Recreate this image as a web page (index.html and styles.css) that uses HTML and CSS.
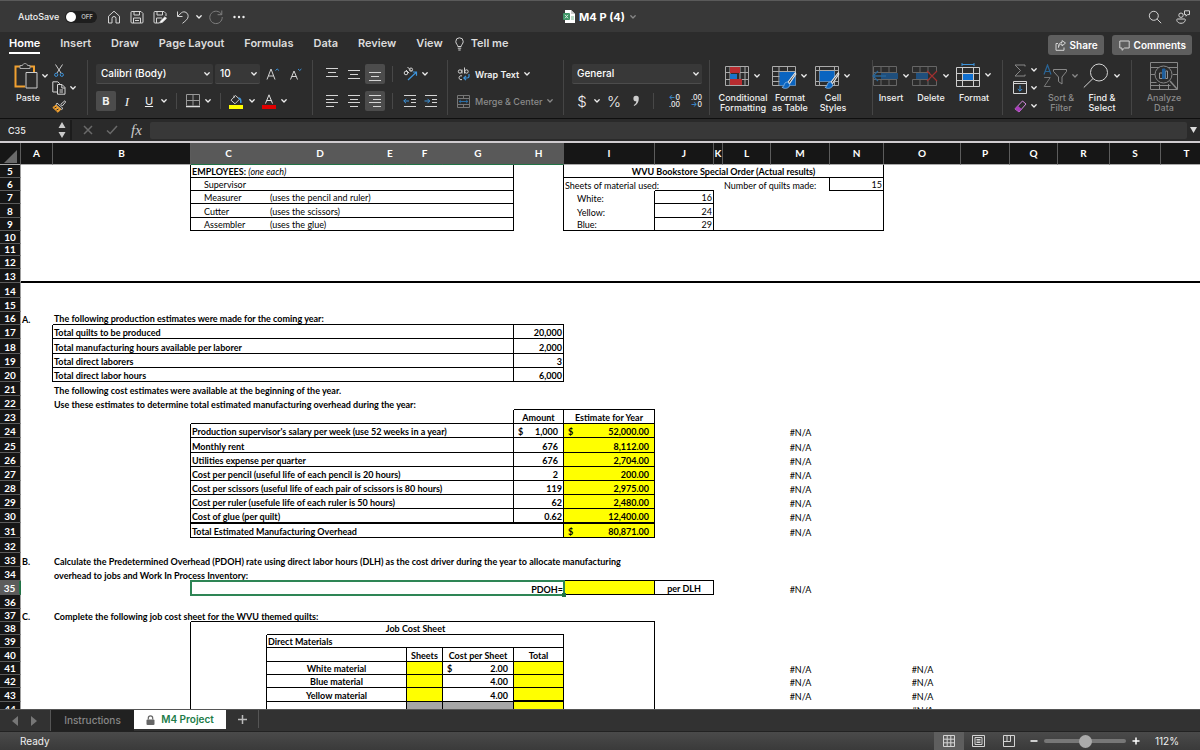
FILE: index.html
```html
<!DOCTYPE html>
<html lang="en">
<head>
<meta charset="utf-8">
<title>M4 P (4)</title>
<link rel="stylesheet" href="styles.css">
</head>
<body>
<svg class="defs" width="0" height="0" aria-hidden="true">
  <symbol id="chev" viewBox="0 0 8 8"><path d="M1.8 2.8 4 5 6.2 2.8" fill="none" stroke="currentColor" stroke-width="1.3" stroke-linecap="round" stroke-linejoin="round"/></symbol>
  <symbol id="brush" viewBox="0 0 14 18"><path d="M13 1.500 6 10.500l1.500 1.500L13.500 3z" fill="#2c2c2c" stroke="#e6e6e6"/><path d="M5.500 10.500c-2 0-3 1.500-3.200 3-.1 1-1 1.700-2 1.800 2.400 2 7.200 1.500 7.500-2.500z" fill="#0a64c0" stroke="#7fb4ea" stroke-width=".8"/></symbol>
</svg>

<header class="titlebar">
  <div class="quick">
    <label class="autosave" for="autosave">AutoSave</label>
    <span class="switch"><input type="checkbox" id="autosave" class="switch-input"><span class="knob"></span><span class="off">OFF</span></span>
    <button class="ib" aria-label="Home"><svg width="14" height="14" viewBox="0 0 14 14" class="ln"><path d="M1.500 6.200 7 1.200l5.500 5V13H9V8.500a2 2 0 0 0-4 0V13H1.500z"/></svg></button>
    <button class="ib" aria-label="Save"><svg width="14" height="14" viewBox="0 0 14 14" class="ln"><path d="M1 2.500a1 1 0 0 1 1-1h9l2 2V12a1 1 0 0 1-1 1H2a1 1 0 0 1-1-1zM4 1.500V5h5.500V1.500M3.500 13V8h7v5M5 10.500h4"/></svg></button>
    <button class="ib" aria-label="Save as"><svg width="14" height="14" viewBox="0 0 14 14" class="ln"><path d="M6 13H2a1 1 0 0 1-1-1V2.500a1 1 0 0 1 1-1h9l2 2V6M4 1.500V5h5.500V1.500M3.500 13V8H9"/><path d="M6.500 13 8 10.500 12 6.800l1.500 1.500-4.200 4z" fill="#fff"/></svg></button>
    <button class="ib" aria-label="Undo"><svg width="14" height="14" viewBox="0 0 14 14" class="ln"><path d="M1.500 1.500v5h5M1.700 6.300 5.500 2.700c3-2.300 7 .4 6.600 3.800C12 9 10 10.500 6.500 13.300"/></svg></button>
    <svg class="chev" width="8" height="8"><use href="#chev"/></svg>
    <button class="ib redo" aria-label="Redo"><svg width="16" height="16" viewBox="0 0 16 16" class="ln"><path d="M13.500 5.500A6.200 6.200 0 1 0 14.200 8M13.800 1.500v4.200H9.600"/></svg></button>
    <button class="ib dots" aria-label="More"><svg width="12" height="4" viewBox="0 0 12 4"><g fill="#eee"><circle cx="1.500" cy="2" r="1.200"/><circle cx="6" cy="2" r="1.200"/><circle cx="10.500" cy="2" r="1.200"/></g></svg></button>
  </div>
  <div class="doc">
    <svg width="12" height="13" viewBox="0 0 12 13"><path d="M2 0h6l4 4v9H2z" fill="#fff"/><path d="M8 0v4h4z" fill="#ccc"/><rect y="3" width="7" height="7" rx="1" fill="#3f9466"/><path d="m2 4.800 3 3.500M5 4.800 2 8.300" stroke="#d5efe0"/><path d="M8 7h3M8 9h3" stroke="#79b893"/></svg>
    <span class="doc-name">M4 P (4)</span>
    <svg class="chev dim" width="8" height="8"><use href="#chev"/></svg>
  </div>
  <div class="title-right">
    <button class="ib" aria-label="Search"><svg width="14" height="14" viewBox="0 0 14 14" class="ln"><circle cx="5.800" cy="5.800" r="4.500"/><path d="m9.200 9.200 4 4"/></svg></button>
    <button class="ib" aria-label="Presence"><svg width="14" height="14" viewBox="0 0 14 14" class="ln"><circle cx="5" cy="5.200" r="2.200"/><path d="M1.500 9h7c.8 0 1 .6.800 1.300-.5 2-2.200 3-4.300 3s-3.700-1-4.200-3C.6 9.600.9 9 1.500 9zM8.500.8h5v3.800h-2L10 6.200V4.600H8.500z"/></svg></button>
  </div>
</header>

<nav class="tabs">
  <a href="#" class="tab active">Home</a><a href="#" class="tab">Insert</a><a href="#" class="tab">Draw</a><a href="#" class="tab">Page Layout</a><a href="#" class="tab">Formulas</a><a href="#" class="tab">Data</a><a href="#" class="tab">Review</a><a href="#" class="tab">View</a>
  <a href="#" class="tab tell"><svg width="9" height="14" viewBox="0 0 9 14" class="ln"><path d="M2.800 9.500C2.800 7.500.8 7 .8 4.500a3.700 3.700 0 0 1 7.400 0c0 2.500-2 3-2 5zM2.800 11.200h3.400M3.300 13h2.400"/></svg>Tell me</a>
  <div class="tabs-right">
    <button class="pill"><svg width="11" height="11" viewBox="0 0 11 11" class="ln"><path d="M3 3.500H1v6.800h8V7.500M3.500 7.500C3.700 5 5 4 7 4V6l3.500-3L7 .6v1.800C4.500 2.500 3.300 4.500 3.500 7.500z"/></svg>Share</button>
    <button class="pill"><svg width="11" height="11" viewBox="0 0 11 11" class="ln"><path d="M.8 1h9.400v7H5.500L3 10.300V8H.8z"/></svg>Comments</button>
  </div>
</nav>

<section class="ribbon">
  <div class="group clip">
    <div class="paste">
      <div class="big"><svg width="25" height="26" viewBox="0 0 25 26"><path d="M7 3.500H1.500v20H11M15 3.500h5V9" fill="none" stroke="#f0a030" stroke-width="2"/><path d="M6 5.500V2.500h2.500c.3-2.600 4.700-2.600 5 0H16v3z" fill="#2c2c2c" stroke="#aaa"/><path d="M12 9.500h11v15.500H12z" fill="#2c2c2c" stroke="#ccc"/></svg><svg class="chev" width="8" height="8"><use href="#chev"/></svg></div>
      <button class="lab">Paste</button>
    </div>
    <div class="cliptools">
      <button class="ib" aria-label="Cut"><svg width="10" height="13" viewBox="0 0 10 13" fill="none"><path d="m1.500.5 5.500 8.500M8.500.5 3 9" stroke="#ccc"/><circle cx="2.200" cy="10.800" r="1.600" stroke="#3d94dc"/><circle cx="7.800" cy="10.800" r="1.600" stroke="#3d94dc"/></svg></button><span></span>
      <button class="ib" aria-label="Copy"><svg width="14" height="14" viewBox="0 0 14 14" class="ln"><path d="M5 11H.8V.8h5l2 2M5.500 3.500H10l3 3v6.700H5.500zM9.800 3.500V7H13M7.500 9h3.500M7.500 11h3.500"/></svg></button><svg class="chev" width="8" height="8"><use href="#chev"/></svg>
      <button class="ib" aria-label="Format painter"><svg width="14" height="13" viewBox="0 0 14 13" fill="none"><path d="m12.800.8-4 3.500 1.500 1.700 3.300-4z" stroke="#ccc"/><path d="m5 3 6 5.500-1.800 1L4 4.800z" stroke="#ccc"/><path d="M4 5.200.8 7.500 6 12.300l2.800-3z" stroke="#f0a030" fill="#f0a030"/><path d="m2.500 8 2-1M4.500 10l2-1" stroke="#2c2c2c"/></svg></button><span></span>
    </div>
  </div>

  <div class="group">
    <div class="row font1">
      <span class="pick"><select aria-label="Font"><option>Calibri (Body)</option></select><svg class="chev" width="8" height="8"><use href="#chev"/></svg></span>
      <span class="pick"><select aria-label="Font size"><option>10</option></select><svg class="chev" width="8" height="8"><use href="#chev"/></svg></span>
      <button class="ib" aria-label="Increase font size"><svg width="14" height="14" viewBox="0 0 14 14" class="ln"><path d="M1 12.500 5 2l4 10.500M2.500 9h5"/><path d="M9.500 3.500 11.200 2l1.700 1.500" stroke="#3d94dc"/></svg></button>
      <button class="ib" aria-label="Decrease font size"><svg width="14" height="14" viewBox="0 0 14 14" class="ln"><path d="M1.500 12.500 5 4l3.500 8.500M2.800 9.500h4.400"/><path d="M9 2l1.700 1.500L12.400 2" stroke="#3d94dc"/></svg></button>
    </div>
    <div class="row font2">
      <button class="ib on"><b>B</b></button><button class="ib"><i class="serif">I</i></button><button class="ib light"><u>U</u></button><svg class="chev" width="8" height="8"><use href="#chev"/></svg>
      <i class="sep"></i>
      <button class="ib" aria-label="Borders"><svg width="14" height="14" viewBox="0 0 14 14" fill="none" stroke="#999"><path d="M.5.5h13v11M.5.5v11M7 .5v11M.5 6.500h13" /><path d="M0 12.500h14" stroke="#ddd" stroke-width="1.500"/></svg></button><svg class="chev" width="8" height="8"><use href="#chev"/></svg>
      <i class="sep"></i>
      <button class="ib" aria-label="Fill color"><svg width="14" height="15" viewBox="0 0 14 15"><path d="M6.500 1.500 2 6.200l4 3.600 4.500-4.600zM5 4V1.500" fill="none" stroke="#ccc"/><path d="M9.500 4c2 0 2.500 2 2.300 5" fill="none" stroke="#3d94dc" stroke-width="1.500"/><rect y="11" width="14" height="4" fill="#ff0"/></svg></button><svg class="chev" width="8" height="8"><use href="#chev"/></svg>
      <button class="ib" aria-label="Font color"><svg width="14" height="15" viewBox="0 0 14 15"><path d="M3.500 9.500 7 .8l3.500 8.700M4.700 6.500h4.600" fill="none" stroke="#ddd"/><rect y="11" width="14" height="4" fill="#e00000"/></svg></button><svg class="chev" width="8" height="8"><use href="#chev"/></svg>
    </div>
  </div>

  <div class="group">
    <div class="row align1">
      <button class="ib" aria-label="Top align"><svg width="12" height="14" viewBox="0 0 12 14" class="ln"><path d="M0 1.500h12M2 5.500h8M0 9.500h12"/></svg></button>
      <button class="ib" aria-label="Middle align"><svg width="12" height="14" viewBox="0 0 12 14" class="ln"><path d="M0 3.500h12M2 7.500h8M0 11.500h12"/></svg></button>
      <button class="ib on" aria-label="Bottom align"><svg width="12" height="14" viewBox="0 0 12 14" class="ln"><path d="M0 5.500h12M2 9.500h8M0 13.500h12"/></svg></button>
      <i class="sep"></i>
      <button class="ib" aria-label="Orientation"><svg width="15" height="14" viewBox="0 0 15 14" class="ln"><circle cx="3" cy="6" r="1.800"/><path d="m3 3 3.200 3.200M4.500 0l4.200 4.200"/><circle cx="8" cy="2.600" r="1.600"/><path d="m5 13 8.500-8M9.800 5h3.700v3.700" stroke="#3d94dc" stroke-width="1.200"/></svg></button><svg class="chev" width="8" height="8"><use href="#chev"/></svg>
    </div>
    <div class="row align2">
      <button class="ib" aria-label="Align left"><svg width="12" height="12" viewBox="0 0 12 12" class="ln"><path d="M0 .5h12M0 4.500h8M0 7.500h12M0 11.500h8"/></svg></button>
      <button class="ib" aria-label="Center"><svg width="12" height="12" viewBox="0 0 12 12" class="ln"><path d="M0 .5h12M2 4.500h8M0 7.500h12M2 11.500h8"/></svg></button>
      <button class="ib on" aria-label="Align right"><svg width="12" height="12" viewBox="0 0 12 12" class="ln"><path d="M0 .5h12M4 4.500h8M0 7.500h12M4 11.500h8"/></svg></button>
      <i class="sep"></i>
      <button class="ib" aria-label="Decrease indent"><svg width="13" height="12" viewBox="0 0 13 12" class="ln"><path d="M1 .5h12M8 4.500h5M8 7.500h5M1 11.500h12"/><path d="M.8 6H6M3 3.800.8 6 3 8.200" stroke="#3d94dc"/></svg></button>
      <button class="ib" aria-label="Increase indent"><svg width="13" height="12" viewBox="0 0 13 12" class="ln"><path d="M1 .5h12M8 4.500h5M8 7.500h5M1 11.500h12"/><path d="M.5 6h5.200M3.500 3.800 5.700 6 3.500 8.200" stroke="#3d94dc"/></svg></button>
    </div>
  </div>

  <div class="group">
    <div class="row wrap">
      <svg width="13" height="14" viewBox="0 0 13 14" class="ln"><circle cx="3" cy="4.500" r="1.700"/><path d="M5 2.500v4M7.500.5v6"/><circle cx="9.500" cy="4.500" r="1.700"/><path d="M5 9a2 2 0 1 0 0 3.500"/><path d="M12 7v2.500c0 1-.8 1.500-2 1.500H7M9 8.800 6.800 11 9 13.200" stroke="#3d94dc" stroke-width="1.200"/></svg>
      <button class="tb strong">Wrap Text</button><svg class="chev" width="8" height="8"><use href="#chev"/></svg>
    </div>
    <div class="row wrap off-state">
      <svg width="13" height="13" viewBox="0 0 13 13" fill="none" stroke="#777"><path d="M.5.5h12v12H.5zM.5 3.500h12M.5 9.500h12M6.500.5v3M6.500 9.500v3"/><path d="M2 6.500h9M3.800 5 2.200 6.500 3.800 8M9.200 5l1.600 1.500L9.200 8" stroke="#2a6ea6"/></svg>
      <button class="tb">Merge &amp; Center</button><svg class="chev" width="8" height="8"><use href="#chev"/></svg>
    </div>
  </div>

  <div class="group">
    <div class="row num1">
      <span class="pick"><select aria-label="Number format"><option>General</option></select><svg class="chev" width="8" height="8"><use href="#chev"/></svg></span>
    </div>
    <div class="row num2">
      <button class="ib sym">$</button><svg class="chev" width="8" height="8"><use href="#chev"/></svg><button class="ib sym">%</button><button class="ib comma" aria-label="Comma style"><svg width="8" height="12" viewBox="0 0 8 12"><path d="M4 .8a2.700 2.700 0 0 1 2.800 2.900c0 3-1.500 5.700-4.600 7.300l-.5-.8c1.700-1 2.500-2.200 2.600-3.900A2.700 2.700 0 1 1 4 .8z" fill="#ccc"/></svg></button>
      <i class="sep"></i>
      <button class="ib dec"><span><em>←</em>0</span><span>.00</span></button><button class="ib dec"><span>.00</span><span><em>→</em>0</span></button>
    </div>
  </div>

  <div class="group items styles">
    <div class="item"><div class="big"><svg width="24" height="20" viewBox="0 0 24 20"><path d="M.5.5h23v19H.5zM5 .5v19M15 .5v19M20 .5v19M.5 6.500h23M.5 13.500h23" fill="none" stroke="#aaa"/><rect x="5" y="1" width="10" height="6" fill="#b82c30"/><rect x="5" y="8" width="7" height="5" fill="#1873c9"/><rect x="5" y="13" width="12" height="6" fill="#b82c30"/></svg><svg class="chev" width="8" height="8"><use href="#chev"/></svg></div><button class="lab">Conditional<br>Formatting</button></div>
    <div class="item"><div class="big"><span class="stack"><svg width="24" height="20" viewBox="0 0 24 20"><path d="M.5.5h23v19H.5zM7 .5v19M15.500 .5v19M.5 5.500h23M.5 10.500h23M.5 15.500h23" fill="none" stroke="#aaa"/><rect x="7.500" y="6" width="16" height="13.500" fill="#0a64c0"/></svg><svg class="over" width="18" height="19"><use href="#brush"/></svg></span><svg class="chev" width="8" height="8"><use href="#chev"/></svg></div><button class="lab">Format<br>as Table</button></div>
    <div class="item"><div class="big"><span class="stack"><svg width="24" height="20" viewBox="0 0 24 20"><path d="M.5.5h23v19H.5zM4.500 .5v19M.5 4.500h23M19.500 .5v19M.5 15.500h23" fill="none" stroke="#aaa"/><rect x="4.500" y="5" width="15" height="10.500" fill="#0a64c0"/></svg><svg class="over" width="18" height="19"><use href="#brush"/></svg></span><svg class="chev" width="8" height="8"><use href="#chev"/></svg></div><button class="lab">Cell<br>Styles</button></div>
  </div>

  <div class="group items cells">
    <div class="item"><div class="big"><svg width="26" height="20" viewBox="0 0 26 20"><path d="M1.500.5h23v19h-23zM9 .5v6M17 .5v6M9 13v6.500M17 13v6.500M1.500 6.500h23M1.500 13.500h23" fill="none" stroke="#666"/><path d="M9 7h17v6H9z" fill="#1f4f7d"/><path d="M14 10H1M6 5 1 10l5 5" fill="none" stroke="#2a6596" stroke-width="1.300"/></svg><svg class="chev" width="8" height="8"><use href="#chev"/></svg></div><button class="lab">Insert</button></div>
    <div class="item"><div class="big"><svg width="26" height="20" viewBox="0 0 26 20"><path d="M.5.500h24v5M.5.500v6M.5 13.500v6h24v-5M8 .5v6M16 .5v6M8 13v6.500M16 13v6.500M.5 6.500h17M.5 13.500h17" fill="none" stroke="#666"/><path d="M4 7h12v6H4z" fill="#1f4f7d"/><path d="m15 5 10 10M25 5 15 15" stroke="#a03030" stroke-width="1.200"/></svg><svg class="chev" width="8" height="8"><use href="#chev"/></svg></div><button class="lab">Delete</button></div>
    <div class="item"><div class="big fmt"><svg width="24" height="24" viewBox="0 0 24 24"><path d="M.5 4.500h23v19H.5zM6.500 4.500v19M17.500 4.500v19M.5 10.500h23M.5 17.500h23" fill="none" stroke="#ccc"/><rect x="7" y="11" width="10" height="6" fill="#0f6fd0"/><path d="M6 1.500h12M6 0v3M18 0v3" stroke="#3d94dc"/></svg><svg class="chev" width="8" height="8"><use href="#chev"/></svg></div><button class="lab">Format</button></div>
  </div>

  <div class="group items edit">
    <div class="edittools">
      <button class="ib" aria-label="AutoSum"><svg width="12" height="13" viewBox="0 0 12 13" fill="none" stroke="#888"><path d="M11 2.500V1H1l5.500 5.500L1 12h10v-1.500"/></svg></button><svg class="chev" width="8" height="8"><use href="#chev"/></svg>
      <button class="ib" aria-label="Fill"><svg width="14" height="13" viewBox="0 0 14 13" class="ln"><path d="M.5.5h13v12H.5zM.5 2.500h13"/><path d="M7 4.500v5.500M4.800 8 7 10.200 9.200 8" stroke="#3d94dc"/></svg></button><svg class="chev" width="8" height="8"><use href="#chev"/></svg>
      <button class="ib" aria-label="Clear"><svg width="13" height="13" viewBox="0 0 13 13"><path d="M8.500 1 12 4 5 12 1 8.800z" fill="none" stroke="#d58be0"/><path d="M3.800 5.800 1 8.800 5 12l2.700-3z" fill="#a93cba"/></svg></button><svg class="chev" width="8" height="8"><use href="#chev"/></svg>
    </div>
    <div class="item off-state"><div class="big"><svg width="24" height="24" viewBox="0 0 24 24" fill="none"><path d="M1 10.500 4.500 1 8 10.500M2.200 7.500h4.600" stroke="#2a6596" stroke-width="1.200"/><path d="M1.200 13.500h6L1.200 22.500h6.300" stroke="#777"/><path d="M10.500 5.500h13v2L19 13v7l-3.500-2.500V13l-5-5.500z" stroke="#888"/></svg><svg class="chev" width="8" height="8"><use href="#chev"/></svg></div><button class="lab">Sort &amp;<br>Filter</button></div>
    <div class="item"><div class="big"><svg width="26" height="26" viewBox="0 0 26 26" class="ln"><circle cx="16" cy="9.500" r="8.500"/><path d="M10 15.500.8 24.500"/></svg><svg class="chev" width="8" height="8"><use href="#chev"/></svg></div><button class="lab">Find &amp;<br>Select</button></div>
  </div>

  <div class="group items analyze off-state">
    <div class="item"><div class="big"><svg width="28" height="28" viewBox="0 0 28 28" fill="none" stroke="#888"><path d="M.5.5h27v27H.5zM.5 5.500h27M.5 12.500H5M.5 20.500h6M23 12.500h4.500M9.500 22v5.500M18.500 22v5.500M.5 23.500h20"/><circle cx="13.500" cy="12.500" r="8.500" fill="#2c2c2c"/><path d="m20 19 7 8" stroke-width="1.500"/><path d="M9.500 11h3v5.500h-3zM15.500 9h2v7.500h-2z" stroke="#999"/><path d="M12.500 7h2.500v9.500h-2.500z" fill="#1f5f9c" stroke="#1f5f9c"/></svg></div><button class="lab">Analyze<br>Data</button></div>
  </div>
</section>

<section class="formula">
  <div class="namebox"><input class="cellref" value="C35" aria-label="Name box"><svg width="8" height="16" viewBox="0 0 8 16"><path d="m4 0 3.500 6h-7zM4 16l3.500-6h-7z" fill="#ccc"/></svg></div>
  <div class="fx">
    <svg width="10" height="10" viewBox="0 0 10 10"><path d="m1 1 8 8M9 1 1 9" stroke="#6a6a6a" stroke-width="1.500"/></svg>
    <svg width="12" height="10" viewBox="0 0 12 10"><path d="m1 5.500 3.200 3L11 1" stroke="#6a6a6a" stroke-width="1.500" fill="none"/></svg>
    <i class="fxlabel">fx</i>
  </div>
  <input class="fxinput" aria-label="Formula">
  <svg class="expand" width="7" height="6" viewBox="0 0 7 6"><path d="M0 0h7L3.500 6z" fill="#ddd"/></svg>
</section>

<main class="sheet">
<table class="grid">
<colgroup><col class="w21"><col class="w32"><col class="w138"><col class="w76"><col class="w107"><col class="w33"><col class="w36"><col class="w71"><col class="w50"><col class="w91"><col class="w59"><col class="w9"><col class="w48"><col class="w59"><col class="w54"><col class="w77"><col class="w49"><col class="w48"><col class="w52"><col class="w51"><col></colgroup>
<thead><tr><th class="corner"><svg width="13" height="13" viewBox="0 0 13 13"><path d="M13 0v13H0z" fill="#6a6a6a"/></svg></th><th>A</th><th>B</th><th class="s">C</th><th class="s">D</th><th class="s">E</th><th class="s">F</th><th class="s">G</th><th class="s">H</th><th>I</th><th>J</th><th>K</th><th>L</th><th>M</th><th>N</th><th>O</th><th>P</th><th>Q</th><th>R</th><th>S</th><th class="last">T</th></tr></thead>
<tbody>
<tr class="h13"><th>5</th><td></td><td class="r"></td><td colspan="5" class="r b"><b>EMPLOYEES:</b> <i>(one each)</i></td><td class="r"></td><td colspan="6" class="r b c"><b>WVU Bookstore Special Order (Actual results)</b></td><td colspan="6"></td></tr>
<tr class="h13"><th>6</th><td></td><td class="r"></td><td class="b in">Supervisor</td><td colspan="4" class="r b"></td><td class="r"></td><td>Sheets of material used:</td><td class="b"></td><td></td><td colspan="2" class="r">Number of quilts made:</td><td class="r b n">15</td><td colspan="6"></td></tr>
<tr class="h13"><th>7</th><td></td><td class="r"></td><td class="b in">Measurer</td><td colspan="4" class="r b d">(uses the pencil and ruler)</td><td class="r"></td><td class="r in">White:</td><td class="r b n">16</td><td colspan="4" class="r"></td><td colspan="6"></td></tr>
<tr class="h14"><th>8</th><td></td><td class="r"></td><td class="b in">Cutter</td><td colspan="4" class="r b d">(uses the scissors)</td><td class="r"></td><td class="r in">Yellow:</td><td class="r b n">24</td><td colspan="4" class="r"></td><td colspan="6"></td></tr>
<tr class="h13"><th>9</th><td></td><td class="r"></td><td class="b in">Assembler</td><td colspan="4" class="r b d">(uses the glue)</td><td class="r"></td><td class="r b in">Blue:</td><td class="r b n">29</td><td colspan="4" class="r b"></td><td colspan="6"></td></tr>
<tr class="h13"><th>10</th><td colspan="20"></td></tr>
<tr class="h12"><th>11</th><td colspan="20"></td></tr>
<tr class="h13"><th>12</th><td colspan="20"></td></tr>
<tr class="h14"><th>13</th><td colspan="20" class="thick"></td></tr>
<tr class="h15"><th>14</th><td colspan="20"></td></tr>
<tr class="h14"><th>15</th><td colspan="20"></td></tr>
</tbody>
<tbody class="bold">
<tr class="h13"><th>16</th><td>A.</td><td class="b">The following production estimates were made for the coming year:</td><td colspan="6" class="b"></td><td colspan="12"></td></tr>
<tr class="h14"><th>17</th><td class="r"></td><td colspan="6" class="r b">Total quilts to be produced</td><td class="r b n">20,000</td><td colspan="12"></td></tr>
<tr class="h15"><th>18</th><td class="r"></td><td colspan="6" class="r b">Total manufacturing hours available per laborer</td><td class="r b n">2,000</td><td colspan="12"></td></tr>
<tr class="h14"><th>19</th><td class="r"></td><td colspan="6" class="r b">Total direct laborers</td><td class="r b n">3</td><td colspan="12"></td></tr>
<tr class="h14"><th>20</th><td class="r"></td><td colspan="6" class="r b">Total direct labor hours</td><td class="r b n">6,000</td><td colspan="12"></td></tr>
<tr class="h14"><th>21</th><td></td><td colspan="7">The following cost estimates were available at the beginning of the year.</td><td colspan="12"></td></tr>
<tr class="h14"><th>22</th><td></td><td colspan="6">Use these estimates to determine total estimated manufacturing overhead during the year:</td><td class="b"></td><td class="b"></td><td colspan="11"></td></tr>
<tr class="h14"><th>23</th><td></td><td></td><td colspan="5" class="r b"></td><td class="r b c">Amount</td><td class="r b c">Estimate for Year</td><td colspan="11"></td></tr>
<tr class="h14"><th>24</th><td></td><td class="r"></td><td colspan="5" class="r b">Production supervisor's salary per week (use 52 weeks in a year)</td><td class="r b acc"><div class="money"><span>$</span><span>1,000</span></div></td><td class="r b y acc"><div class="money"><span>$</span><span>52,000.00</span></div></td><td colspan="3"></td><td class="c na">#N/A</td><td colspan="7"></td></tr>
<tr class="h15"><th>25</th><td></td><td class="r"></td><td colspan="5" class="r b">Monthly rent</td><td class="r b n acc">676</td><td class="r b y n acc">8,112.00</td><td colspan="3"></td><td class="c na">#N/A</td><td colspan="7"></td></tr>
<tr class="h14"><th>26</th><td></td><td class="r"></td><td colspan="5" class="r b">Utilities expense per quarter</td><td class="r b n acc">676</td><td class="r b y n acc">2,704.00</td><td colspan="3"></td><td class="c na">#N/A</td><td colspan="7"></td></tr>
<tr class="h14"><th>27</th><td></td><td class="r"></td><td colspan="5" class="r b">Cost per pencil (useful life of each pencil is 20 hours)</td><td class="r b n acc">2</td><td class="r b y n acc">200.00</td><td colspan="3"></td><td class="c na">#N/A</td><td colspan="7"></td></tr>
<tr class="h14"><th>28</th><td></td><td class="r"></td><td colspan="5" class="r b">Cost per scissors (useful life of each pair of scissors is 80 hours)</td><td class="r b n">119</td><td class="r b y n acc">2,975.00</td><td colspan="3"></td><td class="c na">#N/A</td><td colspan="7"></td></tr>
<tr class="h14"><th>29</th><td></td><td class="r"></td><td colspan="5" class="r b">Cost per ruler (usefule life of each ruler is 50 hours)</td><td class="r b n">62</td><td class="r b y n acc">2,480.00</td><td colspan="3"></td><td class="c na">#N/A</td><td colspan="7"></td></tr>
<tr class="h14"><th>30</th><td></td><td class="r"></td><td colspan="5" class="r b">Cost of glue (per quilt)</td><td class="r b n">0.62</td><td class="r b y n acc">12,400.00</td><td colspan="3"></td><td class="c na">#N/A</td><td colspan="7"></td></tr>
<tr class="h15"><th>31</th><td></td><td class="r"></td><td colspan="6" class="r b t">Total Estimated Manufacturing Overhead</td><td class="r b y t acc"><div class="money"><span>$</span><span>80,871.00</span></div></td><td colspan="3"></td><td class="c na">#N/A</td><td colspan="7"></td></tr>
<tr class="h15"><th>32</th><td colspan="20"></td></tr>
<tr class="h14"><th>33</th><td>B.</td><td colspan="9">Calculate the Predetermined Overhead (PDOH) rate using direct labor hours (DLH) as the cost driver during the year to allocate manufacturing</td><td colspan="10"></td></tr>
<tr class="h14"><th>34</th><td></td><td colspan="7">overhead to jobs and Work In Process Inventory:</td><td class="b"></td><td class="b"></td><td colspan="10"></td></tr>
<tr class="h14"><th class="s">35</th><td></td><td></td><td colspan="6" class="n sel">PDOH=<span class="handle"></span></td><td class="r b y"></td><td class="r b c">per DLH</td><td colspan="2"></td><td class="c na">#N/A</td><td colspan="7"></td></tr>
<tr class="h14"><th>36</th><td colspan="20"></td></tr>
<tr class="h13"><th>37</th><td>C.</td><td>Complete the following job cost sheet for the WVU themed quilts:</td><td colspan="7" class="b"></td><td colspan="11"></td></tr>
<tr class="h13"><th>38</th><td></td><td class="r"></td><td></td><td colspan="5" class="b c">Job Cost Sheet</td><td class="r"></td><td colspan="11"></td></tr>
<tr class="h13"><th>39</th><td></td><td class="r"></td><td class="r"></td><td colspan="5" class="r b">Direct Materials</td><td class="r"></td><td colspan="11"></td></tr>
<tr class="h14"><th>40</th><td></td><td class="r"></td><td class="r"></td><td colspan="2" class="r b"></td><td class="r b c">Sheets</td><td class="r b c">Cost per Sheet</td><td class="r b c">Total</td><td class="r"></td><td colspan="11"></td></tr>
<tr class="h13"><th>41</th><td></td><td class="r"></td><td class="r"></td><td colspan="2" class="r b c">White material</td><td class="r b y"></td><td class="r b acc"><div class="money"><span>$</span><span>2.00</span></div></td><td class="r b y"></td><td class="r"></td><td colspan="3"></td><td class="c na">#N/A</td><td></td><td class="c na">#N/A</td><td colspan="5"></td></tr>
<tr class="h13"><th>42</th><td></td><td class="r"></td><td class="r"></td><td colspan="2" class="r b c">Blue material</td><td class="r b y"></td><td class="r b n acc">4.00</td><td class="r b y"></td><td class="r"></td><td colspan="3"></td><td class="c na">#N/A</td><td></td><td class="c na">#N/A</td><td colspan="5"></td></tr>
<tr class="h14"><th>43</th><td></td><td class="r"></td><td class="r"></td><td colspan="2" class="r b c">Yellow material</td><td class="r b y"></td><td class="r b n acc">4.00</td><td class="r b2 y"></td><td class="r"></td><td colspan="3"></td><td class="c na">#N/A</td><td></td><td class="c na">#N/A</td><td colspan="5"></td></tr>
<tr class="h14"><th>44</th><td></td><td class="r"></td><td class="r"></td><td colspan="2" class="r b"></td><td class="r b g"></td><td class="r b g"></td><td class="r b y"></td><td class="r"></td><td colspan="3"></td><td></td><td></td><td class="c na">#N/A</td><td colspan="5"></td></tr>
</tbody>
</table>
</main>

<div class="sheets">
  <div class="arrows"><svg width="6" height="10" viewBox="0 0 6 10"><path d="M6 0v10L0 5z" fill="#777"/></svg><svg width="6" height="10" viewBox="0 0 6 10"><path d="M0 0v10l6-5z" fill="#777"/></svg></div>
  <button class="stab">Instructions</button>
  <button class="stab current"><svg width="9" height="10" viewBox="0 0 9 10"><path d="M2.300 4.500V3a2.200 2.200 0 0 1 4.400 0v1.500" fill="none" stroke="#666" stroke-width="1.200"/><rect x=".5" y="4.500" width="8" height="5.500" rx="1" fill="#666"/></svg>M4 Project</button>
  <button class="add" aria-label="Add sheet"><svg width="9" height="9" viewBox="0 0 9 9"><path d="M4.500 0v9M0 4.500h9" stroke="#bbb" stroke-width="1.500"/></svg></button>
</div>

<footer class="status">
  <span class="ready">Ready</span>
  <button class="view on" aria-label="Normal view"><svg width="12" height="12" viewBox="0 0 12 12" class="ln"><path d="M.5.500h11v11H.5zM4.200.5v11M7.800.5v11M.5 4.200h11M.5 7.800h11"/></svg></button>
  <button class="view" aria-label="Page layout"><svg width="13" height="12" viewBox="0 0 13 12" class="ln"><path d="M.5.500h12v11H.5zM3 2.500h7v7H3zM4.500 4.500h4M4.500 6h4M4.500 7.500h4"/></svg></button>
  <button class="view" aria-label="Page break preview"><svg width="12" height="12" viewBox="0 0 12 12" class="ln"><path d="M.5.500h11v11H.5zM4 .5v6M7.500.5v6M.5 6.500h7"/></svg></button>
  <button class="zoom" aria-label="Zoom out"><svg width="8" height="8" viewBox="0 0 8 8"><path d="M.5 4h7" stroke="#fff" stroke-width="1.500"/></svg></button>
  <input type="range" class="slider" min="0" max="100" value="51" aria-label="Zoom">
  <button class="zoom" aria-label="Zoom in"><svg width="8" height="8" viewBox="0 0 8 8"><path d="M.5 4h7M4 .5v7" stroke="#fff" stroke-width="1.500"/></svg></button>
  <span class="pct">112%</span>
</footer>
</body>
</html>
```

FILE: styles.css
```css
* { box-sizing: border-box; }
body {
  margin: 0;
  height: 100vh;
  display: flex;
  flex-direction: column;
  overflow: hidden;
  background: #2c2c2c;
  color: #f0f0f0;
  font: 500 9px/11px Inter, "Liberation Sans", sans-serif;
}
.defs { display: none; }
svg { display: block; flex: none; }
button, input, select { font: inherit; color: inherit; margin: 0; padding: 0; border: 0; background: none; }
button { white-space: nowrap; }
.ln { fill: none; stroke: #d4d4d4; stroke-width: 1; }
.chev { color: #eee; }
.dim { color: #888; }
.ib { display: flex; align-items: center; justify-content: center; }
.on { background: #4c4c4c; border-radius: 2px; }
.off-state, .off-state .chev { color: #8a8a8a; }

/* title bar */
.titlebar {
  display: grid;
  grid-template-columns: 1fr auto 1fr;
  align-items: center;
  height: 32px;
  flex: none;
  background: #383838;
  border-top: 1px solid #5a5a5a;
}
.quick {
  display: grid;
  grid-template-columns: 47px 38px 22px 24px 22px 24px 8px 26px 20px;
  align-items: center;
  justify-items: center;
  padding-left: 18px;
}
.autosave { justify-self: start; font-size: 9px; }
.switch {
  justify-self: start;
  display: grid;
  grid-template-columns: 12px 1fr;
  align-items: center;
  width: 32px;
  height: 12px;
  border-radius: 6px;
  background: #1e1e1e;
}
.switch-input { appearance: none; grid-area: 1 / 1 / 2 / 3; width: 32px; height: 12px; }
.knob { grid-area: 1 / 1; width: 10px; height: 10px; margin-left: 1px; border-radius: 5px; background: #fff; }
.off { grid-area: 1 / 2; text-align: center; font-size: 6px; font-weight: 600; color: #bbb; }
.redo { opacity: .45; }
.doc { display: flex; align-items: center; gap: 4px; }
.doc-name { font-size: 11px; font-weight: 700; line-height: 16px; color: #fff; }
.title-right { display: flex; justify-content: flex-end; gap: 14px; padding-right: 10px; }

/* ribbon tabs */
.tabs {
  display: flex;
  align-items: flex-start;
  gap: 20px;
  height: 28px;
  flex: none;
  padding: 3px 0 0 9px;
  font-size: 11px;
  font-weight: 600;
}
.tab { color: #dcdcdc; text-decoration: none; line-height: 17px; border-bottom: 2px solid transparent; white-space: nowrap; }
.active { color: #fff; border-bottom-color: #fff; }
.tell { display: flex; align-items: center; gap: 7px; margin-left: -8px; }
.tabs-right { display: flex; gap: 8px; margin-left: auto; padding-right: 8px; }
.pill {
  display: flex;
  align-items: center;
  gap: 4px;
  height: 20px;
  padding: 0 6px 0 7px;
  border-radius: 3px;
  background: #5e5e5e;
  color: #fff;
  font-size: 10px;
  font-weight: 600;
}

/* ribbon groups */
.ribbon {
  display: grid;
  grid-template-columns: 88px 225px 135px 116px 146px 163px 130px 129px 1fr;
  height: 58px;
  flex: none;
  padding-bottom: 7px;
}
.group { display: flex; flex-direction: column; gap: 7px; padding: 4px 0 0 8px; border-right: 1px solid #454545; min-width: 0; }
.group:last-child { border-right: 0; }
.row { display: grid; height: 20px; align-items: center; justify-items: center; }
.row .ib { width: 20px; height: 20px; }
.sep { width: 1px; height: 16px; background: #484848; }
.clip { flex-direction: row; gap: 0; }
.paste { width: 42px; padding-left: 6px; }
.paste .lab { width: 28px; }
.cliptools, .edittools { display: grid; grid-template-columns: 18px 10px; grid-template-rows: 16px 19px 18px; align-items: center; justify-items: center; margin-top: -2px; align-self: start; }
.big { display: flex; align-items: center; gap: 4px; height: 24px; }
.paste .big { gap: 2px; }
.lab { display: block; text-align: center; line-height: 10px; margin-top: 5px; }

.font1 { grid-template-columns: 117px 47px 26px 20px; }
.font1 .pick:nth-child(2) { margin-left: 2px; }
.font2 { grid-template-columns: 20px 22px 22px 8px 16px 18px 12px 12px 20px 12px 22px 8px; font-size: 11px; }
.serif { font-family: "Liberation Serif", serif; font-size: 13px; }
.light { font-weight: 400; }
.strong { font-weight: 600; }
.pick { display: grid; justify-self: stretch; align-items: center; height: 20px; border-radius: 2px; background: #383838; border-bottom: 1px solid #4c4c4c; }
.pick select { grid-area: 1 / 1; width: 100%; height: 19px; appearance: none; padding-left: 5px; font-size: 10px; color: #fff; outline: 0; }
.pick svg { grid-area: 1 / 1; justify-self: end; margin-right: 2px; pointer-events: none; }
.align1 { grid-template-columns: 22px 22px 20px 14px 22px 8px; }
.align2 { grid-template-columns: 22px 22px 20px 14px 20px 22px; }
.wrap { grid-template-columns: 15px auto 8px; column-gap: 4px; justify-content: start; }
.num1 { grid-template-columns: 130px; }
.num2 { grid-template-columns: 20px 10px 24px 20px 14px 20px 24px; }
.sym { font-size: 15px; font-weight: 300; }
.dec { flex-direction: column; align-items: flex-end; font-size: 7px; line-height: 7px; }
.dec em { font-style: normal; color: #3d94dc; }
.items { flex-direction: row; gap: 0; }
.item { display: flex; flex-direction: column; align-items: center; }
.styles { display: grid; grid-template-columns: 50px 44px 42px; align-items: start; }
.cells { display: grid; grid-template-columns: 36px 44px 42px; align-items: start; padding-left: 0; }
.edit { display: grid; grid-template-columns: 29px 42px 40px; align-items: start; }
.analyze { justify-content: center; padding-right: 12px; }
.fmt { align-items: center; margin-top: -2px; height: 26px; }
.stack { position: relative; }
.over { position: absolute; left: 8px; top: 5px; }

/* formula bar */
.formula { display: flex; align-items: center; height: 25px; flex: none; border-top: 1px solid #0f0f0f; border-bottom: 2px solid #cfcbcf; background: #2a2a2a; }
.namebox { display: flex; align-items: center; width: 72px; height: 20px; padding: 0 4px 0 8px; border-right: 2px solid #1c1c1c; }
.cellref { flex: 1; min-width: 0; font-size: 9px; }
.fx { display: flex; align-items: center; gap: 13px; width: 78px; padding-left: 11px; }
.fxlabel { font: italic 15px/16px "Liberation Serif", serif; color: #ccc; }
.fxinput { flex: 1; min-width: 0; height: 17px; background: #383838; border-radius: 2px; }
.expand { margin: 0 3px; }

/* worksheet */
.sheet { flex: 1; min-height: 0; overflow: hidden; background: #fff; color: #000; font: 400 9px/11px Lato, Carlito, sans-serif; }
.grid { width: 100%; table-layout: fixed; border-collapse: separate; border-spacing: 0; }
.grid th { padding: 0; background: #161616; color: #fff; font-size: 10px; font-weight: 700; line-height: 11px; text-align: center; }
thead th { height: 22px; border-right: 1px solid #5c5c5c; border-bottom: 1px solid #aaa; }
thead .s { background: #595959; border-bottom-color: #217346; border-right-color: #595959; }
.grid .last { border-right: 0; padding-left: 12px; }
tbody th { border-right: 1px solid #a0a0a0; border-bottom: 1px solid #5c5c5c; vertical-align: bottom; }
.grid tbody .s { background: #5c5c5c; border-right: 2px solid #217346; }
.corner svg { margin: 5px 0 0 4px; }
.grid td { padding: 0 1px; vertical-align: bottom; white-space: nowrap; border: 0 solid #000; }
.bold td { font-weight: 700; }
.grid .r { border-right-width: 1px; }
.grid .b { border-bottom-width: 1px; }
.grid .b2 { border-bottom-width: 2px; }
.grid .t { border-top-width: 1px; }
.grid .thick { border-bottom-width: 2px; }
.grid .n { text-align: right; }
.grid .c { text-align: center; }
.grid .na { font-weight: 400; }
.grid .in { padding-left: 13px; }
.grid .d { padding-left: 3px; }
.grid .acc { padding: 0 5px 0 4px; }
.money { display: flex; justify-content: space-between; }
.y { background: #ff0; }
.g { background: #a6a6a6; }
.sel { position: relative; outline: 2px solid #2e8555; outline-offset: -1px; }
.handle { position: absolute; right: -2px; bottom: -2px; width: 4px; height: 4px; background: #217346; }
.h12 { height: 12px; } .h13 { height: 13px; } .h14 { height: 14px; } .h15 { height: 15px; }
.w9 { width: 9px; } .w21 { width: 21px; } .w32 { width: 32px; } .w33 { width: 33px; } .w36 { width: 36px; }
.w48 { width: 48px; } .w49 { width: 49px; } .w50 { width: 50px; } .w51 { width: 51px; } .w52 { width: 52px; }
.w54 { width: 54px; } .w59 { width: 59px; } .w71 { width: 71px; } .w76 { width: 76px; } .w77 { width: 77px; }
.w91 { width: 91px; } .w107 { width: 107px; } .w138 { width: 138px; }

/* sheet tabs */
.sheets { display: flex; height: 22px; flex: none; background: #323232; border-top: 1px solid #555; font-size: 10px; }
.arrows { display: flex; align-items: center; gap: 13px; width: 51px; padding-left: 12px; border-right: 1px solid #555; }
.stab { display: flex; align-items: center; justify-content: center; gap: 6px; width: 83px; background: #212121; color: #888; }
.current { width: 92px; height: 19px; background: #fff; color: #217c48; font-weight: 600; }
.add { display: flex; align-items: center; justify-content: center; width: 33px; height: 18px; border-right: 1px solid #555; }

/* status bar */
.status { display: flex; align-items: center; height: 19px; flex: none; padding-right: 21px; background: linear-gradient(#4a4a4a, #3a3a3a); border-top: 1px solid #222; font-size: 10px; font-weight: 400; }
.ready { flex: 1; padding-left: 20px; }
.view { display: flex; align-items: center; justify-content: center; width: 30px; height: 18px; }
.view.on { background: #5e5e5e; border-radius: 0; }
.zoom { display: flex; justify-content: center; width: 20px; }
.slider { appearance: none; width: 82px; height: 4px; border-radius: 2px; background: #777; outline: 0; }
.slider::-webkit-slider-thumb { appearance: none; width: 13px; height: 13px; border-radius: 7px; background: #aaa; }
.pct { margin-left: 9px; }
```
